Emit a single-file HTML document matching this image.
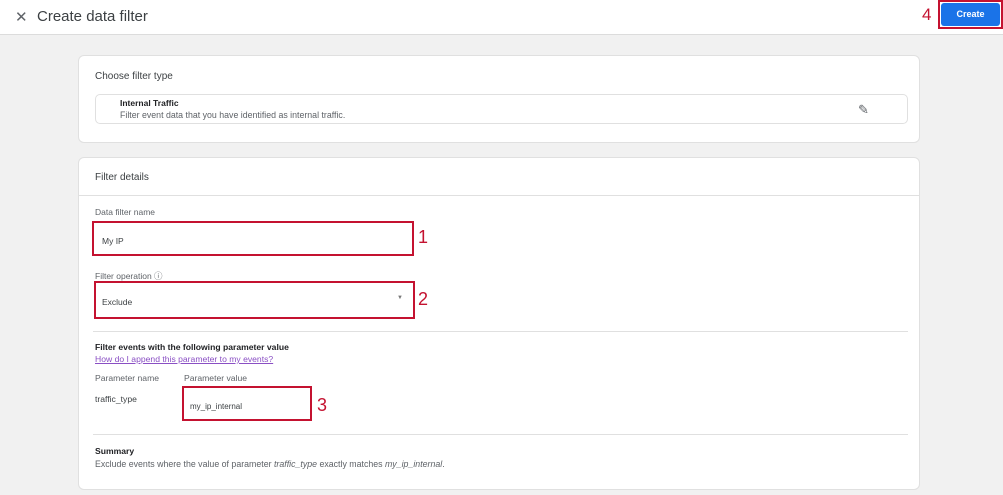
<!DOCTYPE html>
<html><head><style>
body{margin:0;width:1003px;height:495px;background:#f1f1f1;font-family:"Liberation Sans",sans-serif;position:relative;overflow:hidden;color:#202124}
.a{position:absolute}
.hdr{left:0;top:0;width:1003px;height:34px;background:#fff;border-bottom:1px solid #dcdcdc}
.card{background:#fff;border:1px solid #e0e0e0;border-radius:6px}
.red{border:2px solid #c41230;box-sizing:border-box}
.num{color:#c41230;font-size:18px}
.s{font-size:9px;color:#5f6368}
</style></head><body>
<div class="a hdr"></div>
<div class="a" style="left:15px;top:8px;font-size:15px;color:#5f6368">✕</div>
<div class="a" style="left:37px;top:8px;font-size:15px;color:#3c4043">Create data filter</div>
<div class="a num" style="left:922px;top:5px;font-size:17px">4</div>
<div class="a red" style="left:938px;top:0px;width:65px;height:29px"></div>
<div class="a" style="left:941px;top:3px;width:59px;height:23px;background:#1a73e8;border-radius:3px;color:#fff;font-size:9px;font-weight:bold;text-align:center;line-height:23px">Create</div>

<div class="a card" style="left:78px;top:55px;width:840px;height:86px"></div>
<div class="a" style="left:95px;top:71px;font-size:10px;color:#3c4043">Choose filter type</div>
<div class="a" style="left:95px;top:94px;width:813px;height:30px;border:1px solid #e0e0e0;border-radius:5px;box-sizing:border-box"></div>
<div class="a" style="left:120px;top:98px;font-size:8.5px;font-weight:bold">Internal Traffic</div>
<div class="a s" style="left:120px;top:110px;font-size:8.8px">Filter event data that you have identified as internal traffic.</div>
<div class="a" style="left:858px;top:102px;font-size:13px;color:#5f6368">✎</div>

<div class="a card" style="left:78px;top:157px;width:840px;height:331px"></div>
<div class="a" style="left:95px;top:172px;font-size:10px;color:#3c4043">Filter details</div>
<div class="a" style="left:79px;top:195px;width:840px;height:1px;background:#e0e0e0"></div>
<div class="a s" style="left:95px;top:207px;font-size:8.5px">Data filter name</div>
<div class="a red" style="left:92px;top:221px;width:322px;height:35px"></div>
<div class="a" style="left:102px;top:236px;font-size:8.5px;color:#3c4043">My IP</div>
<div class="a num" style="left:418px;top:227px">1</div>
<div class="a s" style="left:95px;top:270px;font-size:8.5px">Filter operation ⓘ</div>
<div class="a red" style="left:94px;top:281px;width:321px;height:38px"></div>
<div class="a" style="left:102px;top:297px;font-size:8.5px;color:#3c4043">Exclude</div>
<div class="a" style="left:397px;top:295px;font-size:6px;color:#777">▼</div>
<div class="a num" style="left:418px;top:289px">2</div>
<div class="a" style="left:93px;top:331px;width:815px;height:1px;background:#e0e0e0"></div>
<div class="a" style="left:95px;top:342px;font-size:8.6px;font-weight:bold">Filter events with the following parameter value</div>
<div class="a" style="left:95px;top:354px;font-size:8.6px;color:#8a4fc4;text-decoration:underline">How do I append this parameter to my events?</div>
<div class="a s" style="left:95px;top:373px;font-size:8.6px">Parameter name</div>
<div class="a s" style="left:184px;top:373px;font-size:8.6px">Parameter value</div>
<div class="a" style="left:95px;top:394px;font-size:8.6px;color:#3c4043">traffic_type</div>
<div class="a red" style="left:182px;top:386px;width:130px;height:35px"></div>
<div class="a" style="left:190px;top:402px;font-size:8px;color:#3c4043">my_ip_internal</div>
<div class="a num" style="left:317px;top:395px">3</div>
<div class="a" style="left:93px;top:434px;width:815px;height:1px;background:#e0e0e0"></div>
<div class="a" style="left:95px;top:446px;font-size:8.6px;font-weight:bold">Summary</div>
<div class="a s" style="left:95px;top:459px;font-size:8.8px">Exclude events where the value of parameter <i>traffic_type</i> exactly matches <i>my_ip_internal</i>.</div>
</body></html>
